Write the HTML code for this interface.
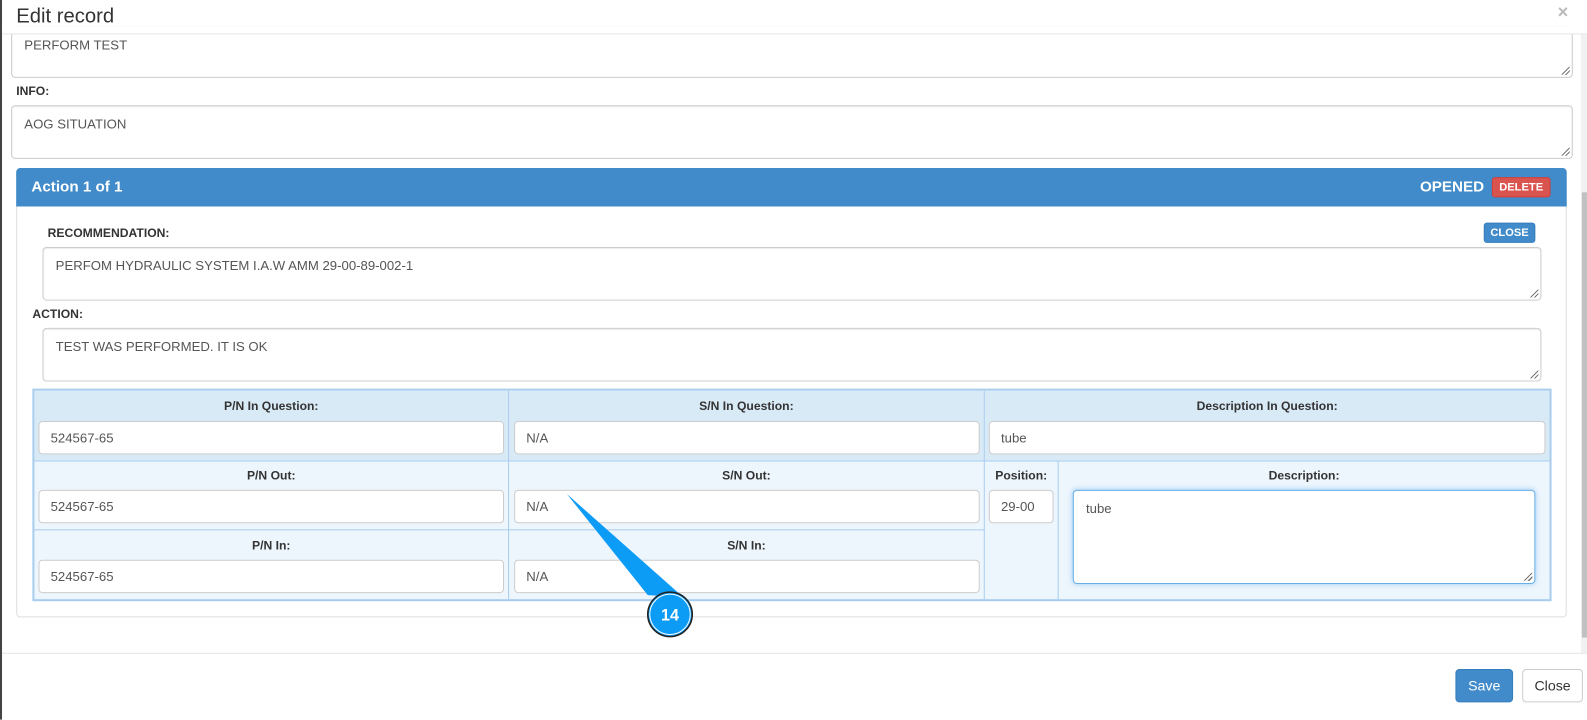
<!DOCTYPE html>
<html><head><style>
*{box-sizing:border-box;margin:0;padding:0}
body{width:1587px;height:711px;overflow:hidden;background:#fff;font-family:"Liberation Sans",Arial,sans-serif;color:#333;position:relative}
#w{position:absolute;left:0;top:0;width:1568px;height:703px;transform:scale(1.0121);transform-origin:0 0}
.a{position:absolute}
.ta{position:absolute;border:1px solid #ccc;border-radius:4px;background:#fff;font-size:13px;color:#555;padding:10px 12px;box-shadow:inset 0 1px 1px rgba(0,0,0,.075)}
.ta::after{content:"";position:absolute;right:2px;bottom:2px;width:8px;height:8px;background:linear-gradient(135deg,transparent 45%,#777 45%,#777 55%,transparent 55%,transparent 70%,#777 70%,#777 80%,transparent 80%)}
.in{position:absolute;border:1px solid #ccc;border-radius:4px;background:#fff;font-size:13px;color:#555;padding:0 11px;height:33px;line-height:31px}
.lb{position:absolute;font-size:12px;font-weight:bold;color:#333}
.cl{position:absolute;font-size:12px;font-weight:bold;color:#333;text-align:center}
</style></head><body><div id="w">
<div class="a" style="left:0;top:0;width:2px;height:711px;background:#444"></div>
<div class="a" style="left:16px;top:5px;font-size:20px;color:#333">Edit record</div>
<div class="a" style="left:1539px;top:2px;font-size:18px;color:#bbb;font-weight:bold">×</div>
<div class="a" style="left:1562px;top:34px;width:7px;height:611px;background:#f1f1f1"></div>
<div class="a" style="left:1563px;top:190px;width:5px;height:440px;background:#c1c1c1"></div>

<div class="ta" style="left:11px;top:26px;width:1543px;height:51px;padding-top:10px">PERFORM TEST</div>
<div class="a" style="left:2px;top:26px;width:1558px;height:7px;background:#fff"></div>
<div class="a" style="left:2px;top:33px;width:1585px;height:1px;background:#e5e5e5"></div>
<div class="lb" style="left:16px;top:83px">INFO:</div>
<div class="ta" style="left:11px;top:104px;width:1543px;height:53px">AOG SITUATION</div>

<div class="a" style="left:16px;top:166px;width:1532px;height:444px;border:1px solid #ddd;border-radius:4px"></div>
<div class="a" style="left:16px;top:166px;width:1532px;height:38px;background:#428bca;border-radius:4px 4px 0 0"></div>
<div class="a" style="left:31px;top:176px;font-size:15px;font-weight:bold;color:#fff">Action 1 of 1</div>
<div class="a" style="left:1403px;top:176px;font-size:15px;font-weight:bold;color:#fff">OPENED</div>
<div class="a" style="left:1474px;top:175px;width:58px;height:20px;background:#d9534f;border:1px solid #d43f3a;border-radius:3px;color:#fff;font-size:11px;font-weight:bold;text-align:center;line-height:18px">DELETE</div>

<div class="lb" style="left:47px;top:223px">RECOMMENDATION:</div>
<div class="a" style="left:1466px;top:220px;width:51px;height:20px;background:#428bca;border:1px solid #357ebd;border-radius:3px;color:#fff;font-size:11px;font-weight:bold;text-align:center;line-height:18px">CLOSE</div>
<div class="ta" style="left:42px;top:244px;width:1481px;height:53px">PERFOM HYDRAULIC SYSTEM I.A.W AMM 29-00-89-002-1</div>
<div class="lb" style="left:32px;top:303px">ACTION:</div>
<div class="ta" style="left:42px;top:324px;width:1481px;height:53px">TEST WAS PERFORMED. IT IS OK</div>

<div class="a" style="left:32px;top:384px;width:1501px;height:210px;border:2px solid #a9cdef;background:#eef6fd"></div>
<div class="a" style="left:34px;top:386px;width:1497px;height:69px;background:#d9eaf7"></div>
<div class="a" style="left:34px;top:455px;width:1497px;height:1px;background:#a9cdef"></div>
<div class="a" style="left:34px;top:523px;width:939px;height:1px;background:#a9cdef"></div>
<div class="a" style="left:502px;top:386px;width:1px;height:206px;background:#a9cdef"></div>
<div class="a" style="left:972px;top:386px;width:1px;height:206px;background:#a9cdef"></div>
<div class="a" style="left:1045px;top:456px;width:1px;height:136px;background:#a9cdef"></div>

<div class="cl" style="left:34px;top:394px;width:468px">P/N In Question:</div>
<div class="cl" style="left:503px;top:394px;width:469px">S/N In Question:</div>
<div class="cl" style="left:973px;top:394px;width:558px">Description In Question:</div>
<div class="in" style="left:38px;top:416px;width:460px">524567-65</div>
<div class="in" style="left:508px;top:416px;width:460px">N/A</div>
<div class="in" style="left:977px;top:416px;width:550px">tube</div>

<div class="cl" style="left:34px;top:463px;width:468px">P/N Out:</div>
<div class="cl" style="left:503px;top:463px;width:469px">S/N Out:</div>
<div class="cl" style="left:973px;top:463px;width:72px">Position:</div>
<div class="cl" style="left:1046px;top:463px;width:485px">Description:</div>
<div class="in" style="left:38px;top:484px;width:460px">524567-65</div>
<div class="in" style="left:508px;top:484px;width:460px">N/A</div>
<div class="in" style="left:977px;top:484px;width:64px">29-00</div>
<div class="ta" style="left:1060px;top:484px;width:457px;height:93px;border-color:#66afe9;box-shadow:0 0 6px rgba(102,175,233,.6)">tube</div>

<div class="cl" style="left:34px;top:532px;width:468px">P/N In:</div>
<div class="cl" style="left:503px;top:532px;width:469px">S/N In:</div>
<div class="in" style="left:38px;top:553px;width:460px">524567-65</div>
<div class="in" style="left:508px;top:553px;width:460px">N/A</div>

<svg class="a" style="left:0;top:0" width="1587" height="711">
<polygon points="560,488 640,588 675,590" fill="#0c9bf5"/>
<circle cx="662" cy="607" r="22" fill="#0c9bf5" stroke="#222" stroke-width="1.5"/>
<circle cx="662" cy="607" r="20" fill="none" stroke="#fff" stroke-width="1"/>
<text x="662" y="613" text-anchor="middle" font-family="Liberation Sans" font-weight="bold" font-size="16" fill="#fff">14</text>
</svg>

<div class="a" style="left:2px;top:645px;width:1585px;height:1px;background:#e5e5e5"></div>
<div class="a" style="left:1438px;top:661px;width:57px;height:33px;background:#428bca;border:1px solid #357ebd;border-radius:4px;color:#fff;font-size:14px;text-align:center;line-height:31px">Save</div>
<div class="a" style="left:1504px;top:661px;width:60px;height:33px;background:#fff;border:1px solid #ccc;border-radius:4px;color:#333;font-size:14px;text-align:center;line-height:31px">Close</div>
</div></body></html>
